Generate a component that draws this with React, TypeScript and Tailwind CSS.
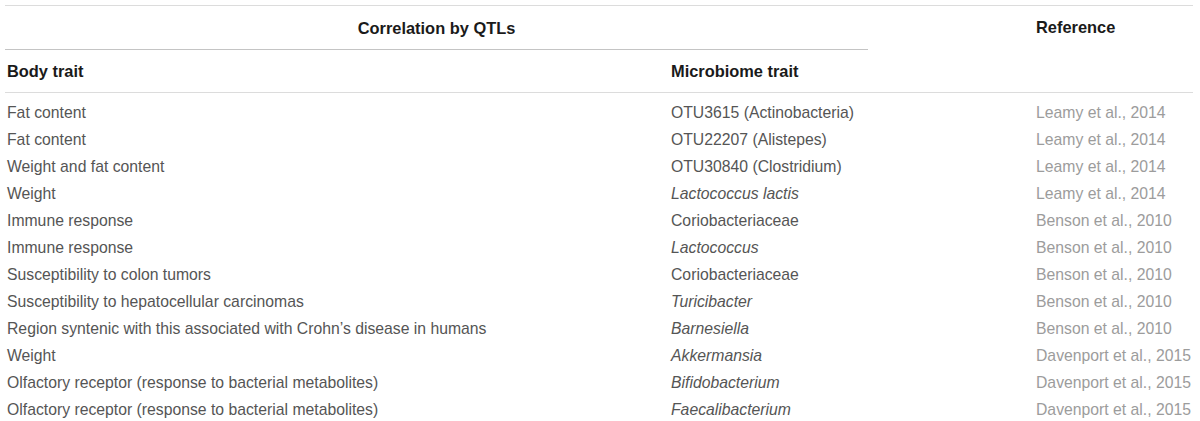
const rows: { body: string; microbe: string; italic?: boolean; ref: string }[] = [
  { body: "Fat content", microbe: "OTU3615 (Actinobacteria)", ref: "Leamy et al., 2014" },
  { body: "Fat content", microbe: "OTU22207 (Alistepes)", ref: "Leamy et al., 2014" },
  { body: "Weight and fat content", microbe: "OTU30840 (Clostridium)", ref: "Leamy et al., 2014" },
  { body: "Weight", microbe: "Lactococcus lactis", italic: true, ref: "Leamy et al., 2014" },
  { body: "Immune response", microbe: "Coriobacteriaceae", ref: "Benson et al., 2010" },
  { body: "Immune response", microbe: "Lactococcus", italic: true, ref: "Benson et al., 2010" },
  { body: "Susceptibility to colon tumors", microbe: "Coriobacteriaceae", ref: "Benson et al., 2010" },
  { body: "Susceptibility to hepatocellular carcinomas", microbe: "Turicibacter", italic: true, ref: "Benson et al., 2010" },
  { body: "Region syntenic with this associated with Crohn’s disease in humans", microbe: "Barnesiella", italic: true, ref: "Benson et al., 2010" },
  { body: "Weight", microbe: "Akkermansia", italic: true, ref: "Davenport et al., 2015" },
  { body: "Olfactory receptor (response to bacterial metabolites)", microbe: "Bifidobacterium", italic: true, ref: "Davenport et al., 2015" },
  { body: "Olfactory receptor (response to bacterial metabolites)", microbe: "Faecalibacterium", italic: true, ref: "Davenport et al., 2015" },
];

export default function App() {
  return (
    <div className="min-h-screen bg-white pt-[5px] pl-[5px] pr-[7px] font-['Liberation_Sans',Arial,sans-serif] text-[15.75px]">
      <div className="border-t border-[#dcdcdc]">
        {/* Header */}
        <div className="flex">
          <div className="w-[863px]">
            <div className="h-[44px] border-b border-[#c4c4c4] flex items-center justify-center pt-[1px] font-bold text-[16.4px] text-[#1a1a1a]">
              Correlation by QTLs
            </div>
            <div className="h-[42px] flex items-center font-bold text-[16.4px] text-[#1a1a1a]">
              <div className="w-[666px] pl-[2px]">Body trait</div>
              <div>Microbiome trait</div>
            </div>
          </div>
          <div className="flex-1 pl-[168px] pt-[9px] font-bold text-[16.4px] text-[#1a1a1a]">Reference</div>
        </div>

        {/* Rows */}
        <div className="border-t border-[#dcdcdc] pt-[6px]">
          {rows.map((r, i) => (
            <div key={i} className="flex h-[27px] items-center">
              <div className="w-[666px] pl-[2px] text-[#555]">{r.body}</div>
              <div className={`w-[365px] text-[#555] ${r.italic ? "italic" : ""}`}>{r.microbe}</div>
              <div className="flex-1 text-[#9c9c9c]">{r.ref}</div>
            </div>
          ))}
        </div>
      </div>
    </div>
  );
}
